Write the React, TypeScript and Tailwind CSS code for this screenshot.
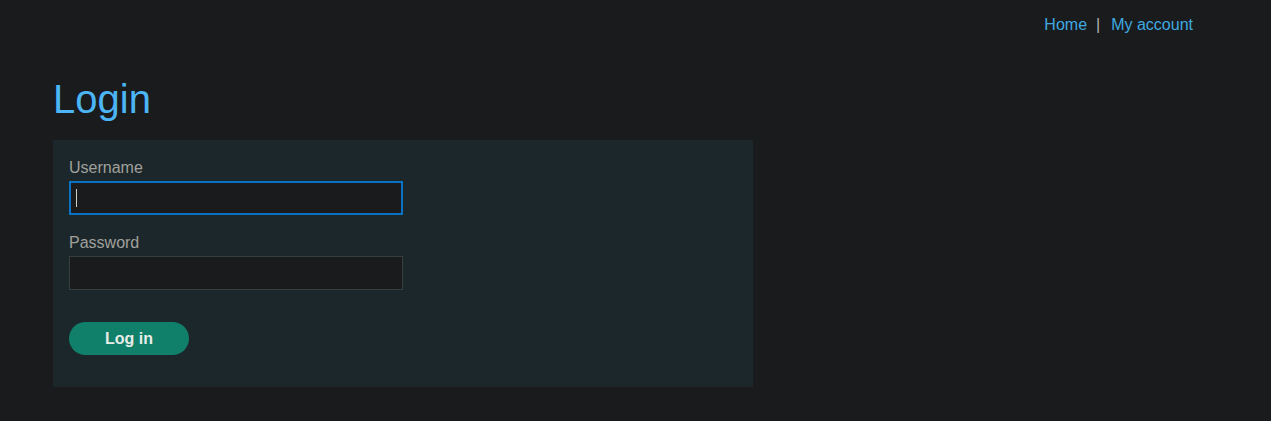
export default function App() {
  return (
    <div className="min-h-screen w-full bg-[#1a1b1d] font-['Liberation_Sans',Arial,sans-serif] text-[16px]">
      <nav className="flex justify-end pt-[16px] pr-[78px] leading-[18px]">
        <a href="#" className="text-[#3fa9e0]">Home</a>
        <span className="ml-[9px] mr-[11px] text-[#b4b4b4]">|</span>
        <a href="#" className="text-[#3fa9e0]">My account</a>
      </nav>

      <main className="px-[53px]">
        <h1 className="mt-[41px] mb-[17px] text-[40px] leading-[48px] text-[#4cb5f5]">Login</h1>

        <form className="w-[700px] bg-[#1c272c] pt-[19px] pb-[32px] px-[16px]">
          <label className="block leading-[18px] text-[#a1a19b]" htmlFor="username">
            Username
          </label>
          <div className="relative mt-[4px] w-[334px]">
            <input
              id="username"
              type="text"
              className="block h-[34px] w-full border-2 border-[#0a72c2] bg-[#1a1b1d] px-[6px] text-[#e0e0e0] caret-transparent outline-none"
            />
            <span className="absolute left-[7px] top-[8px] h-[18px] w-px bg-[#d0d0c8]" />
          </div>

          <label className="mt-[19px] block leading-[18px] text-[#a1a19b]" htmlFor="password">
            Password
          </label>
          <input
            id="password"
            type="password"
            className="mt-[4px] block h-[34px] w-[334px] border border-[#36403f] bg-[#1a1b1d] px-[6px] text-[#e0e0e0] outline-none"
          />

          <button
            type="button"
            className="mt-[32px] block h-[33px] w-[120px] rounded-full bg-[#10806a] font-bold leading-[18px] text-[#e8ede8]"
          >
            Log in
          </button>
        </form>
      </main>
    </div>
  );
}
